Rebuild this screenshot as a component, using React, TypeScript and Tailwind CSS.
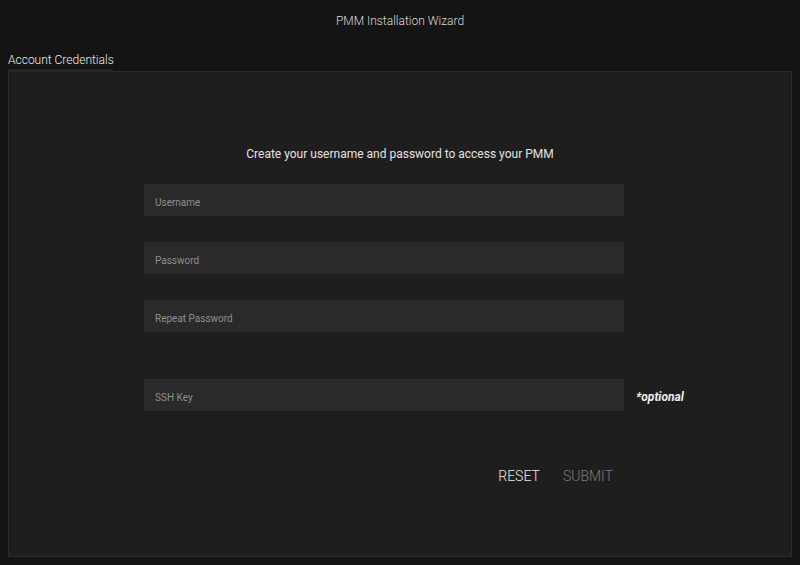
import React from "react";

const font = { fontFamily: "Roboto, 'Noto Sans', sans-serif" };

function Field({ placeholder }: { placeholder: string }) {
  return (
    <div className="w-[480px] h-[32px] bg-[#2a2a2a] flex items-center px-[11px] pt-[6px]">
      <input
        className="w-full bg-transparent outline-none text-[10px] leading-[14px] text-[#e0e0e0] placeholder:text-[#8f8f8f]"
        placeholder={placeholder}
        style={font}
      />
    </div>
  );
}

export default function App() {
  return (
    <div className="w-[800px] h-[565px] bg-[#141414] flex flex-col" style={font}>
      <div className="h-[40px] pt-[2px] flex items-center justify-center text-[12px] font-light text-[#dadada]">
        PMM Installation Wizard
      </div>
      <div className="px-[8px] flex flex-col">
        <div className="flex">
          <div className="flex flex-col">
            <div className="text-[12px] leading-[16px] font-light text-[#ececec] pt-[12px] pb-[1px]">Account Credentials</div>
            <div className="w-[105px] h-[2px] bg-[#242424]" />
          </div>
        </div>
        <div className="h-[486px] bg-[#1f1e1f] border border-[#2a2a2a] flex flex-col">
          <div className="pt-[74px] text-center text-[12px] leading-[16px] text-[#e2e2e2]">
            Create your username and password to access your PMM
          </div>
          <div className="ml-[135px] mt-[22px] flex flex-col">
            <Field placeholder="Username" />
            <div className="mt-[26px]">
              <Field placeholder="Password" />
            </div>
            <div className="mt-[26px]">
              <Field placeholder="Repeat Password" />
            </div>
            <div className="mt-[47px] flex items-center">
              <Field placeholder="SSH Key" />
              <span className="ml-[12px] pt-[4px] text-[12px] italic font-bold text-[#ececec]">*optional</span>
            </div>
            <div className="w-[480px] mt-[47px] flex justify-end">
              <button className="pl-[12px] pr-[10px] h-[36px] text-[14px] font-light uppercase text-[#ececec]">Reset</button>
              <button className="pl-[13px] pr-[11px] h-[36px] text-[14px] font-light uppercase text-[#7c7c7c]">Submit</button>
            </div>
          </div>
        </div>
      </div>
    </div>
  );
}
